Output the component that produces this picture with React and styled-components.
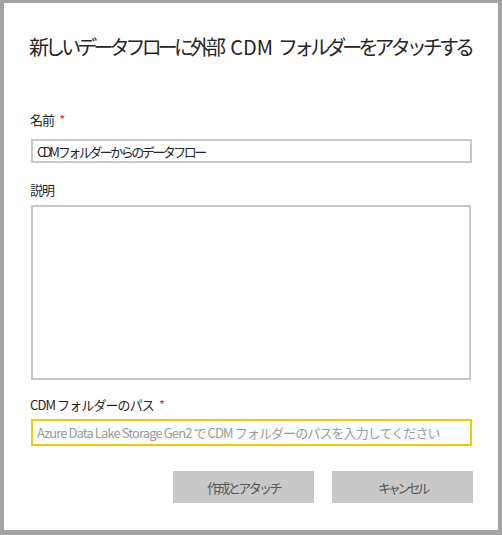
import styled, { createGlobalStyle } from 'styled-components'

const GlobalStyle = createGlobalStyle`
  html, body {
    margin: 0;
    padding: 0;
    background: #fff;
  }
  body {
    font-family: "Noto Sans CJK JP", "Noto Sans", sans-serif;
  }
`

const Frame = styled.div`
  width: 502px;
  height: 535px;
  box-sizing: border-box;
  border-style: solid;
  border-color: #a3a3a3;
  border-width: 3px 4px 5px 4px;
  background: #fff;
`

const Panel = styled.form`
  display: flex;
  flex-direction: column;
  padding: 29px 26px 0 27px;
`

const Title = styled.h1`
  margin: 0 0 0 -2px;
  font-size: 20px;
  font-weight: 400;
  line-height: 30px;
  color: #252525;
  letter-spacing: -3.9px;
  white-space: nowrap;
`

const Latin = styled.span`
  letter-spacing: 0;
  margin: 0 5px 0 8px;
`

const Field = styled.div`
  display: flex;
  flex-direction: column;
  margin-top: ${(p) => p.$top}px;
`

const Label = styled.label`
  font-size: 13px;
  line-height: 18px;
  color: #252525;
  letter-spacing: -0.9px;
  margin: 0 0 ${(p) => p.$gap || 6}px -1px;
`

const Required = styled.span`
  color: #e03a3a;
  margin-left: 5px;
`

const TextInput = styled.input`
  box-sizing: border-box;
  width: 441px;
  height: ${(p) => (p.$focus ? 27 : 24)}px;
  margin: 0;
  padding: 0 4px;
  border: 2px solid ${(p) => (p.$focus ? '#f2c811' : '#c8c8c8')};
  font-family: inherit;
  font-size: 13px;
  letter-spacing: ${(p) => (p.$focus ? -0.9 : -2.5)}px;
  color: #252525;
  outline: none;
  background: #fff;

  &::placeholder {
    color: #9a9a9a;
  }
`

const TextArea = styled.textarea`
  box-sizing: border-box;
  width: 440px;
  height: 175px;
  margin: 0;
  padding: 4px;
  border: 2px solid #c8c8c8;
  font-family: inherit;
  font-size: 13px;
  resize: none;
  outline: none;
`

const Actions = styled.div`
  display: flex;
  justify-content: flex-end;
  gap: 18px;
  margin-top: 25px;
  width: 442px;
`

const Button = styled.button`
  width: 141px;
  height: 32px;
  border: none;
  background: #c8c8c8;
  color: #555;
  font-family: inherit;
  font-size: 13px;
  letter-spacing: ${(p) => p.$tight || -2.6}px;
  padding: 0;
  cursor: pointer;
`

export default function App() {
  return (
    <Frame>
      <GlobalStyle />
      <Panel onSubmit={(e) => e.preventDefault()}>
        <Title>
          新しいデータフローに外部<Latin>CDM</Latin>フォルダーをアタッチする
        </Title>
        <Field $top={49}>
          <Label $gap={10}>
            名前<Required>*</Required>
          </Label>
          <TextInput defaultValue="CDM フォルダーからのデータフロー" />
        </Field>
        <Field $top={18}>
          <Label>説明</Label>
          <TextArea />
        </Field>
        <Field $top={16}>
          <Label $gap={5}>
            CDM フォルダーのパス<Required>*</Required>
          </Label>
          <TextInput
            $focus
            placeholder="Azure Data Lake Storage Gen2 で CDM フォルダーのパスを入力してください"
          />
        </Field>
        <Actions>
          <Button type="submit">作成とアタッチ</Button>
          <Button type="button" $tight={-3.2}>
            キャンセル
          </Button>
        </Actions>
      </Panel>
    </Frame>
  )
}
